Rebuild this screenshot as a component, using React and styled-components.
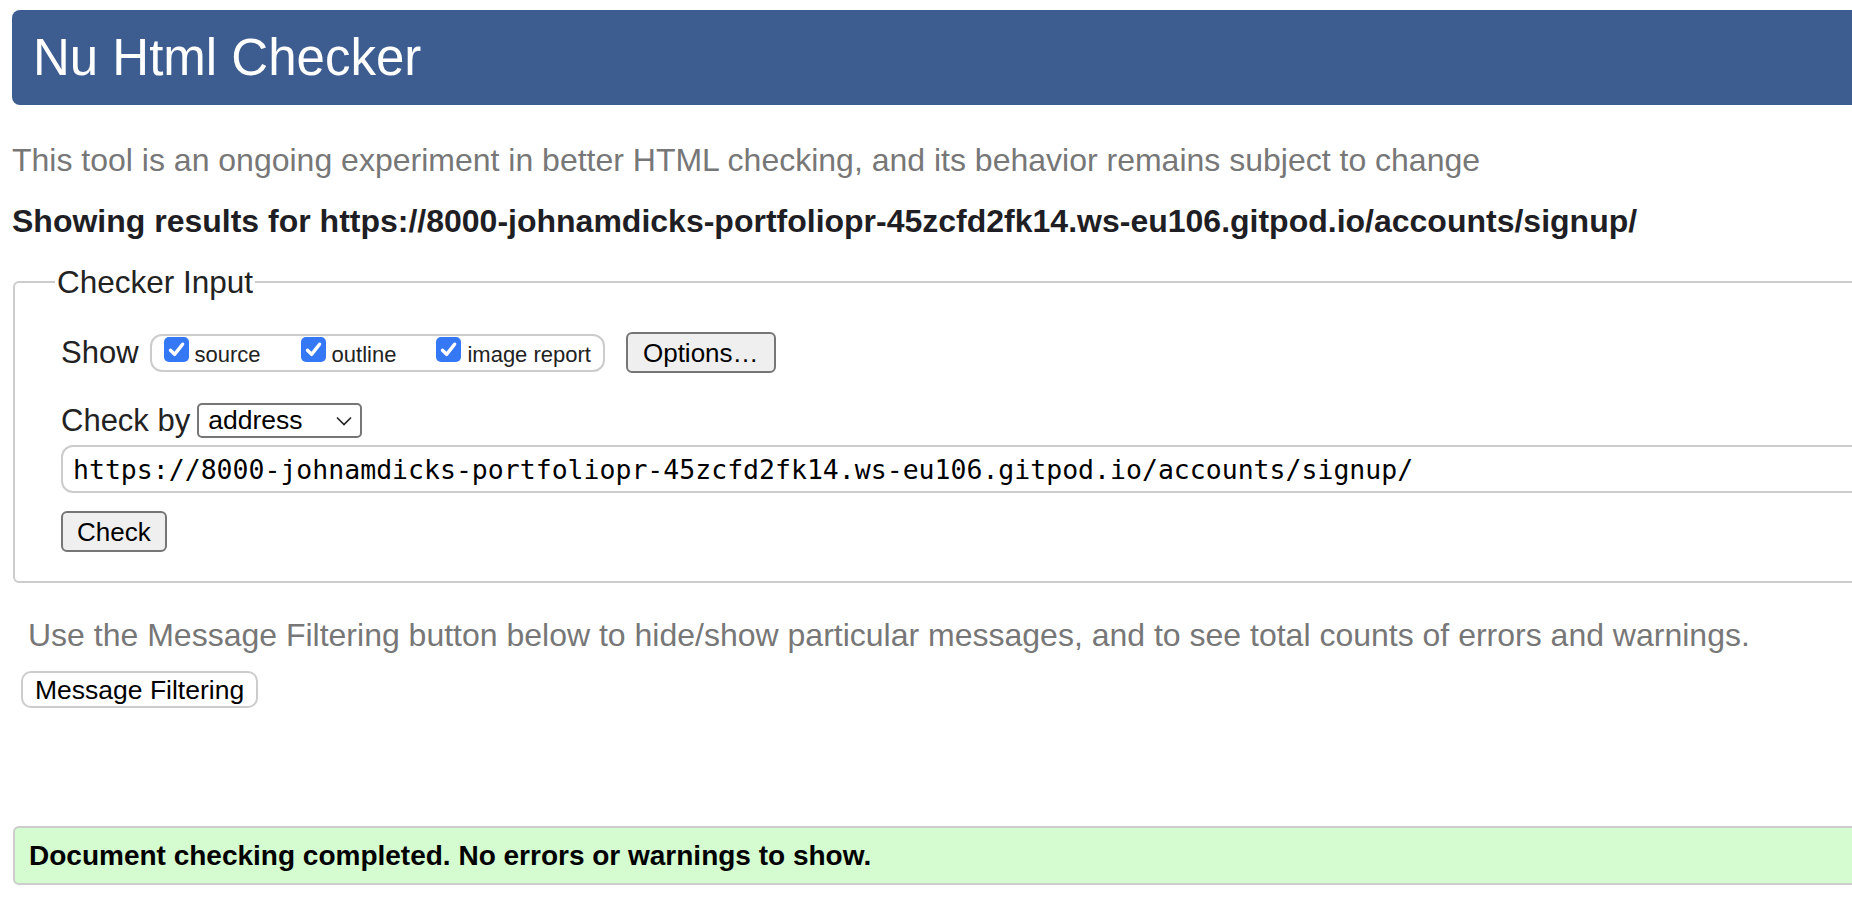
import React from 'react';
import styled, { createGlobalStyle } from 'styled-components';

const Global = createGlobalStyle`
  html, body {
    margin: 0;
    overflow: hidden;
    background: #fff;
  }
  body {
    font-family: "Liberation Sans", Arial, Helvetica, sans-serif;
    color: #222;
  }
`;

const Page = styled.div`
  width: 2100px;
  padding: 10px 0 0 12px;
`;

const Header = styled.h1`
  margin: 0;
  height: 95px;
  display: flex;
  align-items: center;
  padding-left: 21px;
  background: #3d5d91;
  color: #fff;
  border-radius: 8px;
  font-size: 51px;
  font-weight: normal;
`;

const Note = styled.p`
  margin: ${(p) => p.$top}px 0 0 ${(p) => p.$left || 0}px;
  font-size: 32px;
  line-height: 34px;
  color: #777;
`;

const Results = styled.p`
  margin: 27px 0 0;
  font-size: 32px;
  line-height: 34px;
  font-weight: bold;
  color: #1e1e24;
`;

const Fieldset = styled.fieldset`
  margin: 26px 0 0 1px;
  padding: 32px 0 29px 40px;
  border: 2px solid #ccc;
  border-radius: 6px;
  min-width: 0;
`;

const Legend = styled.legend`
  padding: 0 2px;
  font-size: 31.5px;
  line-height: 36px;
  color: #222;
`;

const Body = styled.div`
  margin-left: 6px;
  display: flex;
  flex-direction: column;
`;

const Row = styled.div`
  display: flex;
  align-items: center;
  margin-top: ${(p) => p.$top || 0}px;
`;

const Label = styled.span`
  font-size: 31px;
  line-height: 35px;
  color: #222;
  margin-right: ${(p) => p.$gap}px;
`;

const Group = styled.div`
  display: flex;
  align-items: flex-start;
  gap: 40px;
  padding: 1px 12px 3px 12px;
  border: 2px solid #ccc;
  border-radius: 12px;
  margin-right: 21px;
`;

const Option = styled.label`
  display: flex;
  align-items: baseline;
  gap: 6px;
  font-size: 22px;
  line-height: 25px;
  color: #222;
`;

const Box = styled.span`
  display: inline-block;
  width: 25px;
  height: 25px;
  border-radius: 5px;
  background: #3478f6;
  flex: none;
  svg {
    display: block;
  }
`;

const Button = styled.button`
  font-family: "Liberation Sans", Arial, sans-serif;
  font-size: ${(p) => (p.$plain ? 26.5 : 26)}px;
  line-height: 30px;
  color: #000;
  height: ${(p) => p.$h}px;
  padding: 0 ${(p) => p.$px}px;
  background: ${(p) => (p.$plain ? '#fff' : '#efefef')};
  border: 2px solid ${(p) => (p.$plain ? '#ccc' : '#767676')};
  border-radius: ${(p) => (p.$plain ? 10 : 6)}px;
  margin-top: ${(p) => p.$top || 0}px;
  margin-left: ${(p) => p.$left || 0}px;
  align-self: flex-start;
`;

const Select = styled.div`
  width: 165px;
  height: 35px;
  box-sizing: border-box;
  display: flex;
  align-items: center;
  justify-content: space-between;
  padding: 0 8px 0 9px;
  border: 2px solid #767676;
  border-radius: 5px;
  font-size: 26.5px;
  color: #000;
`;

const UrlInput = styled.div`
  margin-top: 7px;
  height: 48px;
  box-sizing: border-box;
  display: flex;
  align-items: center;
  padding-left: 10px;
  border: 2px solid #ccc;
  border-radius: 12px;
  font-family: "DejaVu Sans Mono", "Liberation Mono", monospace;
  font-size: 26.5px;
  color: #000;
  white-space: nowrap;
`;

const Success = styled.div`
  margin: 118px 0 0 1px;
  height: 59px;
  box-sizing: border-box;
  display: flex;
  align-items: center;
  padding-left: 14px;
  background: #d4fcd0;
  border: 2px solid #ccc;
  border-radius: 6px;
  font-size: 28px;
  font-weight: bold;
  color: #000;
`;

const Check = () => (
  <Box>
    <svg width="25" height="25" viewBox="0 0 25 25">
      <path d="M6.5 13.2 L10.6 17.4 L18.6 7.2" fill="none" stroke="#fff" strokeWidth="3.4" strokeLinecap="round" strokeLinejoin="round" />
    </svg>
  </Box>
);

const url = 'https://8000-johnamdicks-portfoliopr-45zcfd2fk14.ws-eu106.gitpod.io/accounts/signup/';

export default function App() {
  return (
    <>
      <Global />
      <Page>
        <Header>Nu Html Checker</Header>
        <Note $top={38}>
          This tool is an ongoing experiment in better HTML checking, and its behavior remains subject to change
        </Note>
        <Results>Showing results for {url}</Results>

        <Fieldset>
          <Legend>Checker Input</Legend>
          <Body>
            <Row>
              <Label $gap={11}>Show</Label>
              <Group>
                <Option><Check />source</Option>
                <Option><Check />outline</Option>
                <Option><Check />image report</Option>
              </Group>
              <Button $h={41} $px={15}>Options…</Button>
            </Row>
            <Row $top={30}>
              <Label $gap={7}>Check by</Label>
              <Select>
                <span>address</span>
                <svg width="16" height="10" viewBox="0 0 16 10">
                  <path d="M1 1.5 L8 8.5 L15 1.5" fill="none" stroke="#222" strokeWidth="1.6" />
                </svg>
              </Select>
            </Row>
            <UrlInput>{url}</UrlInput>
            <Button $h={41} $px={14} $top={18}>Check</Button>
          </Body>
        </Fieldset>

        <Note $top={35} $left={16}>
          Use the Message Filtering button below to hide/show particular messages, and to see total counts of errors and warnings.
        </Note>
        <Button $plain $h={37} $px={12} $top={19} $left={9}>Message Filtering</Button>

        <Success>Document checking completed. No errors or warnings to show.</Success>
      </Page>
    </>
  );
}
